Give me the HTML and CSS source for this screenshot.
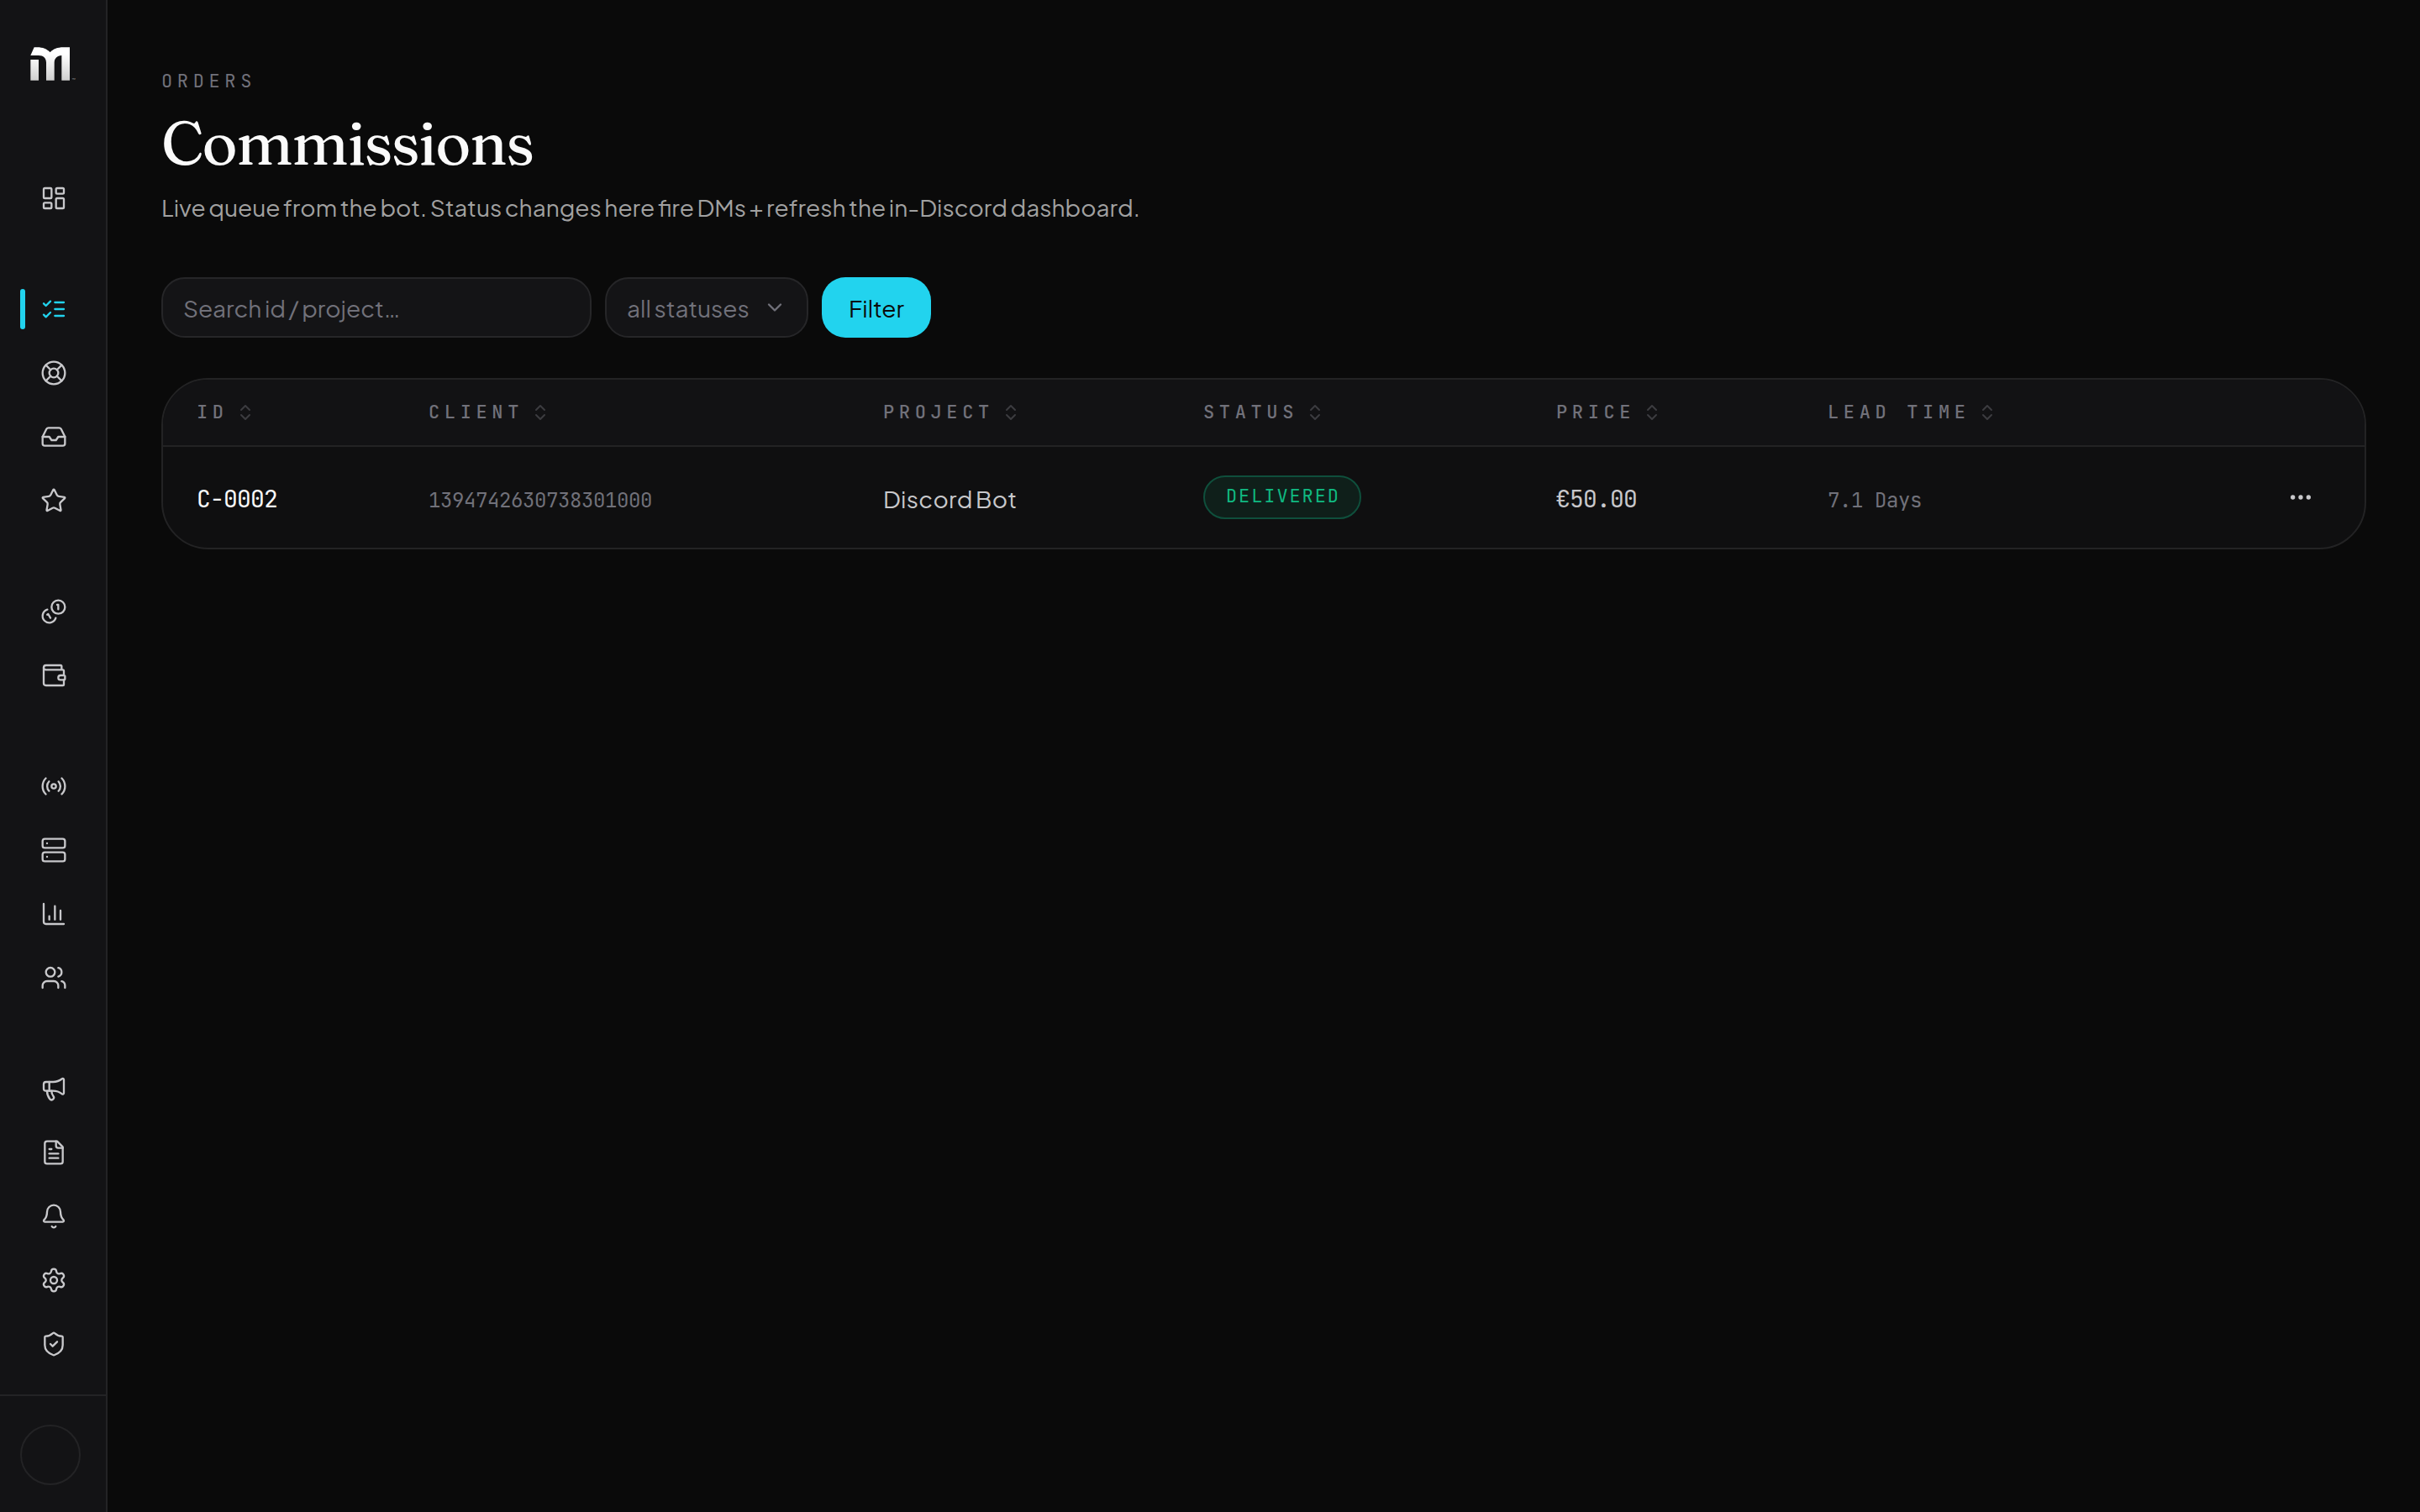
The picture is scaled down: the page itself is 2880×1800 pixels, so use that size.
FILE: index.html
```html
<!DOCTYPE html>
<html lang="en">
<head>
<meta charset="utf-8">
<title>Commissions</title>
<link rel="stylesheet" href="styles.css">
</head>
<body>
<div class="app">
  <aside class="sidebar">
    <a class="logo" href="#" aria-label="Home">
      <svg width="56" height="42" viewBox="108 168 168 126">
        <defs><linearGradient id="lg" x1="0" y1="0" x2="0" y2="1"><stop offset="0.2" stop-color="#fff"/><stop offset="1" stop-color="#cfcfcf"/></linearGradient></defs>
        <path fill="url(#lg)" d="M122 169H133C153 169 167 175 179 187C190 175 205 169 226 169H249V287H220V198C204 199 194 208 194 224V287H165V224C165 207 155 198 138 198H109ZM109 213H138V287H109Z"/>
        <text class="tm" x="256" y="289">™</text>
      </svg>
    </a>
    <nav class="nav">
      <div class="group">
        <a class="item" href="#"><svg class="icon" viewBox="0 0 24 24"><rect width="7" height="9" x="3" y="3" rx="1"/><rect width="7" height="5" x="14" y="3" rx="1"/><rect width="7" height="9" x="14" y="12" rx="1"/><rect width="7" height="5" x="3" y="16" rx="1"/></svg></a>
      </div>
      <div class="group">
        <a class="item active" href="#"><svg class="icon" viewBox="0 0 24 24"><path d="m3 17 2 2 4-4"/><path d="m3 7 2 2 4-4"/><path d="M13 6h8"/><path d="M13 12h8"/><path d="M13 18h8"/></svg></a>
        <a class="item" href="#"><svg class="icon" viewBox="0 0 24 24"><circle cx="12" cy="12" r="10"/><path d="m4.93 4.93 4.24 4.24"/><path d="m14.83 9.17 4.24-4.24"/><path d="m14.83 14.83 4.24 4.24"/><path d="m9.17 14.83-4.24 4.24"/><circle cx="12" cy="12" r="4"/></svg></a>
        <a class="item" href="#"><svg class="icon" viewBox="0 0 24 24"><polyline points="22 12 16 12 14 15 10 15 8 12 2 12"/><path d="M5.45 5.11 2 12v6a2 2 0 0 0 2 2h16a2 2 0 0 0 2-2v-6l-3.45-6.89A2 2 0 0 0 16.76 4H7.24a2 2 0 0 0-1.79 1.11z"/></svg></a>
        <a class="item" href="#"><svg class="icon" viewBox="0 0 24 24"><path d="M11.525 2.295a.53.53 0 0 1 .95 0l2.31 4.679a2.123 2.123 0 0 0 1.595 1.16l5.166.756a.53.53 0 0 1 .294.904l-3.736 3.638a2.123 2.123 0 0 0-.611 1.878l.882 5.14a.53.53 0 0 1-.771.56l-4.618-2.428a2.122 2.122 0 0 0-1.973 0L6.396 21.01a.53.53 0 0 1-.77-.56l.881-5.139a2.122 2.122 0 0 0-.611-1.879L2.16 9.795a.53.53 0 0 1 .294-.906l5.165-.755a2.122 2.122 0 0 0 1.597-1.16z"/></svg></a>
      </div>
      <div class="group">
        <a class="item" href="#"><svg class="icon" viewBox="0 0 24 24"><path d="M13.744 17.736a6 6 0 1 1-7.48-7.48"/><path d="M15 6h1v4"/><path d="m6.134 14.768.866-.5 2 3.464"/><circle cx="16" cy="8" r="6"/></svg></a>
        <a class="item" href="#"><svg class="icon" viewBox="0 0 24 24"><path d="M19 7V4a1 1 0 0 0-1-1H5a2 2 0 0 0 0 4h15a1 1 0 0 1 1 1v4h-3a2 2 0 0 0 0 4h3a1 1 0 0 0 1-1v-2a1 1 0 0 0-1-1"/><path d="M3 5v14a2 2 0 0 0 2 2h15a1 1 0 0 0 1-1v-4"/></svg></a>
      </div>
      <div class="group">
        <a class="item" href="#"><svg class="icon" viewBox="0 0 24 24"><path d="M4.9 19.1C1 15.2 1 8.8 4.9 4.9"/><path d="M7.8 16.2c-2.3-2.3-2.3-6.1 0-8.5"/><circle cx="12" cy="12" r="2"/><path d="M16.2 7.8c2.3 2.3 2.3 6.1 0 8.5"/><path d="M19.1 4.9C23 8.8 23 15.1 19.1 19"/></svg></a>
        <a class="item" href="#"><svg class="icon" viewBox="0 0 24 24"><rect width="20" height="8" x="2" y="2" rx="2"/><rect width="20" height="8" x="2" y="14" rx="2"/><path d="M6 6h.01"/><path d="M6 18h.01"/></svg></a>
        <a class="item" href="#"><svg class="icon" viewBox="0 0 24 24"><path d="M3 3v16a2 2 0 0 0 2 2h16"/><path d="M18 17V9"/><path d="M13 17V5"/><path d="M8 17v-3"/></svg></a>
        <a class="item" href="#"><svg class="icon" viewBox="0 0 24 24"><path d="M16 21v-2a4 4 0 0 0-4-4H6a4 4 0 0 0-4 4v2"/><circle cx="9" cy="7" r="4"/><path d="M22 21v-2a4 4 0 0 0-3-3.87"/><path d="M16 3.13a4 4 0 0 1 0 7.75"/></svg></a>
      </div>
      <div class="group">
        <a class="item" href="#"><svg class="icon" viewBox="0 0 24 24"><path d="M11 6a13 13 0 0 0 8.4-2.8A1 1 0 0 1 21 4v12a1 1 0 0 1-1.6.8A13 13 0 0 0 11 14H5a2 2 0 0 1-2-2V8a2 2 0 0 1 2-2z"/><path d="M6 14a12 12 0 0 0 2.4 7.2 2 2 0 0 0 3.2-2.4A8 8 0 0 1 10 14"/><path d="M8 6v8"/></svg></a>
        <a class="item" href="#"><svg class="icon" viewBox="0 0 24 24"><path d="M15 2H6a2 2 0 0 0-2 2v16a2 2 0 0 0 2 2h12a2 2 0 0 0 2-2V7Z"/><path d="M14 2v4a2 2 0 0 0 2 2h4"/><path d="M10 9H8"/><path d="M16 13H8"/><path d="M16 17H8"/></svg></a>
        <a class="item" href="#"><svg class="icon" viewBox="0 0 24 24"><path d="M10.268 21a2 2 0 0 0 3.464 0"/><path d="M3.262 15.326A1 1 0 0 0 4 17h16a1 1 0 0 0 .74-1.673C19.41 13.956 18 12.499 18 8A6 6 0 0 0 6 8c0 4.499-1.411 5.956-2.738 7.326"/></svg></a>
        <a class="item" href="#"><svg class="icon" viewBox="0 0 24 24"><path d="M9.671 4.136a2.34 2.34 0 0 1 4.659 0 2.34 2.34 0 0 0 3.319 1.915 2.34 2.34 0 0 1 2.33 4.033 2.34 2.34 0 0 0 0 3.831 2.34 2.34 0 0 1-2.33 4.033 2.34 2.34 0 0 0-3.319 1.915 2.34 2.34 0 0 1-4.659 0 2.34 2.34 0 0 0-3.32-1.915 2.34 2.34 0 0 1-2.33-4.033 2.34 2.34 0 0 0 0-3.831A2.34 2.34 0 0 1 6.35 6.051a2.34 2.34 0 0 0 3.319-1.915"/><circle cx="12" cy="12" r="3"/></svg></a>
        <a class="item" href="#"><svg class="icon" viewBox="0 0 24 24"><path d="M20 13c0 5-3.5 7.5-7.66 8.95a1 1 0 0 1-.67-.01C7.5 20.5 4 18 4 13V6a1 1 0 0 1 1-1c2 0 4.5-1.2 6.24-2.72a1.17 1.17 0 0 1 1.52 0C14.51 3.81 17 5 19 5a1 1 0 0 1 1 1z"/><path d="m9 12 2 2 4-4"/></svg></a>
      </div>
    </nav>
    <div class="account"><div class="avatar"></div></div>
  </aside>
  <main class="main">
    <header class="page-head">
      <p class="eyebrow">ORDERS</p>
      <h1 class="title">Commissions</h1>
      <p class="subtitle">Live queue from the bot. Status changes here fire DMs + refresh the in-Discord dashboard.</p>
    </header>
    <div class="filters">
      <div class="field search"><span>Search id / project…</span></div>
      <div class="field select"><span>all statuses</span><svg class="chevron" viewBox="0 0 24 24"><path d="m6 9 6 6 6-6"/></svg></div>
      <button class="button"><span>Filter</span></button>
    </div>
    <section class="table">
      <div class="row head">
        <div class="cell">ID<svg class="sort" viewBox="0 0 24 24"><path d="m7 15 5 5 5-5"/><path d="m7 9 5-5 5 5"/></svg></div>
        <div class="cell">CLIENT<svg class="sort" viewBox="0 0 24 24"><path d="m7 15 5 5 5-5"/><path d="m7 9 5-5 5 5"/></svg></div>
        <div class="cell">PROJECT<svg class="sort" viewBox="0 0 24 24"><path d="m7 15 5 5 5-5"/><path d="m7 9 5-5 5 5"/></svg></div>
        <div class="cell">STATUS<svg class="sort" viewBox="0 0 24 24"><path d="m7 15 5 5 5-5"/><path d="m7 9 5-5 5 5"/></svg></div>
        <div class="cell">PRICE<svg class="sort" viewBox="0 0 24 24"><path d="m7 15 5 5 5-5"/><path d="m7 9 5-5 5 5"/></svg></div>
        <div class="cell">LEAD TIME<svg class="sort" viewBox="0 0 24 24"><path d="m7 15 5 5 5-5"/><path d="m7 9 5-5 5 5"/></svg></div>
        <div class="cell"></div>
      </div>
      <div class="row body">
        <div class="cell mono id">C-0002</div>
        <div class="cell mono small">1394742630738301000</div>
        <div class="cell project">Discord Bot</div>
        <div class="cell"><span class="badge">DELIVERED</span></div>
        <div class="cell mono price">€50.00</div>
        <div class="cell mono small">7.1 Days</div>
        <div class="cell actions"><svg class="more" viewBox="0 0 24 24"><circle cx="5" cy="12" r="2"/><circle cx="12" cy="12" r="2"/><circle cx="19" cy="12" r="2"/></svg></div>
      </div>
    </section>
  </main>
</div>
</body>
</html>
```
FILE: styles.css
```css
* { box-sizing: border-box; margin: 0; padding: 0; }

body {
  background: #0a0a0a;
  color: #d4d4d8;
  font-family: "Plus Jakarta Sans", Inter, sans-serif;
  font-size: 28px;
}

.app { display: flex; height: 1800px; }

/* Sidebar */
.sidebar {
  display: flex;
  flex-direction: column;
  width: 128px;
  flex: none;
  background: #131315;
  border-right: 2px solid #232325;
}
.logo { display: block; height: 200px; padding: 56px 0 0 36px; }
.logo svg { display: block; }
.tm { font: 14px "Liberation Sans", sans-serif; fill: #999; }
.nav { display: flex; flex-direction: column; gap: 60px; flex: 1; }
.group { display: flex; flex-direction: column; gap: 4px; }
.item {
  position: relative;
  display: flex;
  align-items: center;
  height: 72px;
  padding-left: 48px;
  color: #c8c8cb;
}
.item.active { color: #22d3ee; }
.item.active::before {
  content: "";
  position: absolute;
  left: 24px;
  top: 12px;
  width: 6px;
  height: 48px;
  border-radius: 3px;
  background: #22d3ee;
}
svg { flex: none; fill: none; stroke: currentColor; stroke-linecap: round; stroke-linejoin: round; }
.logo svg { stroke: none; }
.icon { width: 32px; height: 32px; stroke-width: 1.75; }
.account { height: 140px; border-top: 2px solid #232325; padding: 34px 0 0 24px; }
.avatar { width: 72px; height: 72px; border: 2px solid #232325; border-radius: 50%; }

/* Page header */
.main { flex: 1; padding: 81px 64px 0; }
.eyebrow {
  font: 22px/32px "JetBrains Mono", "DejaVu Sans Mono", monospace;
  letter-spacing: 5.64px;
  color: #71717a;
}
.title {
  margin-top: 17px;
  font: 400 72px/80px Fraunces, "Liberation Serif", serif;
  letter-spacing: -1.6px;
  color: #fafafa;
}
.subtitle { margin-top: 15px; line-height: 44px; word-spacing: -1.15px; color: #a1a1a1; }

/* Filters */
.filters { display: flex; gap: 16px; margin-top: 61px; }
.field {
  display: flex;
  align-items: center;
  justify-content: space-between;
  height: 72px;
  padding: 0 24px;
  border: 2px solid #262628;
  border-radius: 28px;
  background: #141416;
  color: #71717a;
}
.search { width: 512px; word-spacing: -1.2px; }
.select { width: 242px; word-spacing: -1px; }
.chevron { width: 28px; height: 28px; stroke-width: 2; }
.button {
  width: 130px;
  height: 72px;
  border: 0;
  border-radius: 28px;
  background: #22d3ee;
  color: #0a0a0a;
  font: inherit;
}

/* Orders table */
.table {
  margin-top: 48px;
  border: 2px solid #232324;
  border-radius: 56px;
  overflow: hidden;
  background: #0f0f10;
}
.row { display: grid; grid-template-columns: 276px 541px 381px 420px 323px 1fr 152px; }
.cell { display: flex; align-items: center; padding-left: 40px; white-space: nowrap; }
.head {
  height: 80px;
  border-bottom: 2px solid #232324;
  background: #121214;
  color: #71717a;
  font: 500 22px/32px "JetBrains Mono", "DejaVu Sans Mono", monospace;
  letter-spacing: 5.64px;
}
.sort { width: 24px; height: 24px; margin-left: 8px; stroke-width: 2; color: #3c3c40; }
.body { height: 120px; }
.mono { font-family: "JetBrains Mono", "DejaVu Sans Mono", monospace; letter-spacing: -0.8px; padding-top: 2px; }
.id { color: #fafafa; }
.price { color: #c8c8cb; }
.small { font-size: 24px; letter-spacing: -0.4px; color: #71717a; padding-top: 6px; }
.project { color: #c8c8cb; padding-top: 2px; letter-spacing: 0.3px; word-spacing: -1.8px; }
.badge {
  width: 188px;
  height: 52px;
  padding: 1px 0 0 25px;
  border: 2px solid #0f4f3c;
  border-radius: 26px;
  background: #0f1f1a;
  color: #10b981;
  font: 22px/44px "JetBrains Mono", "DejaVu Sans Mono", monospace;
  letter-spacing: 1.9px;
}
.actions { padding-left: 60px; }
.more { width: 32px; height: 32px; fill: #c8c8cb; stroke: none; }
```
